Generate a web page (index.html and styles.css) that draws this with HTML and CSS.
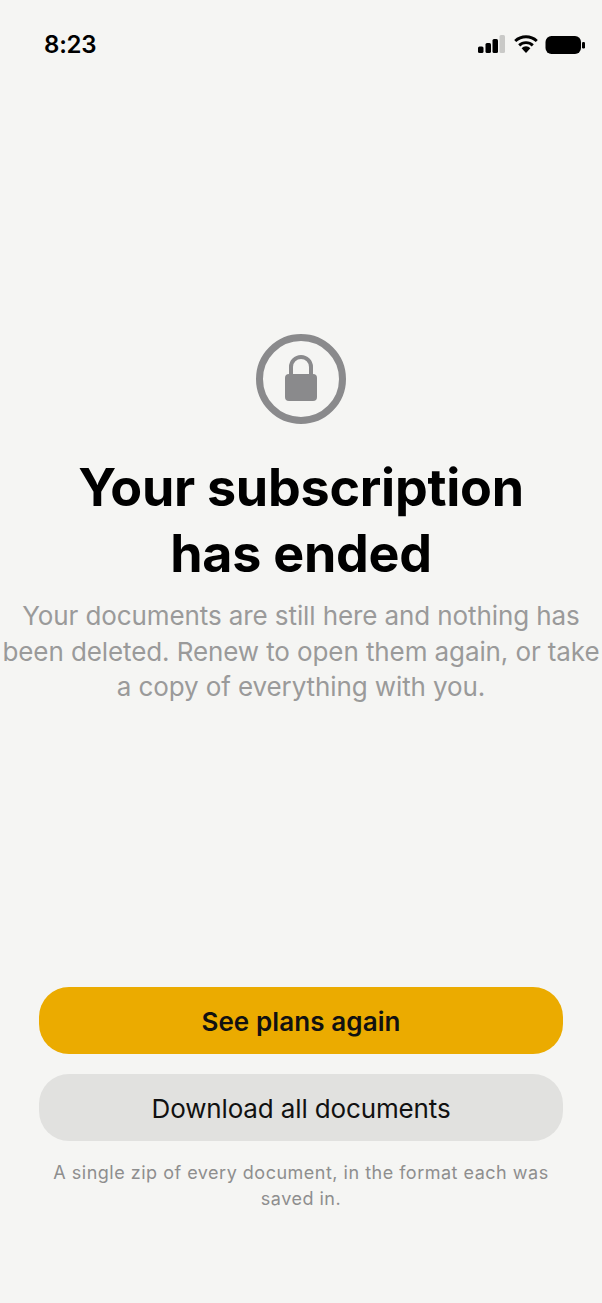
FILE: index.html
```html
<!DOCTYPE html>
<html>
<head>
  <title>Subscription ended</title>
  <meta charset="UTF-8">
  <link rel="stylesheet" href="styles.css">
</head>
<body>
  <div class="status-bar">
    <span class="clock">8:23</span>
    <div class="status-icons">
      <svg class="signal" width="27" height="20" viewBox="0 0 27 20">
        <rect x="0" y="12.500" width="5.500" height="6.500" rx="1.500" fill="#000"/>
        <rect x="7.500" y="9" width="5.500" height="10" rx="1.500" fill="#000"/>
        <rect x="14.500" y="5" width="5.500" height="14" rx="1.500" fill="#000"/>
        <rect x="21.500" y="1" width="5.500" height="18" rx="1.500" fill="#c9c9c7"/>
      </svg>
      <svg class="wifi" width="24" height="20" viewBox="0 0 24 20">
        <path d="M12 19l-4.400-4.800a6.200 6.200 0 0 1 8.800 0z" fill="#000"/>
        <path d="M5.200 11.400a9.800 9.800 0 0 1 13.600 0" fill="none" stroke="#000" stroke-width="2.900"/>
        <path d="M1.200 7a15.800 15.800 0 0 1 21.600 0" fill="none" stroke="#000" stroke-width="2.900"/>
      </svg>
      <svg class="battery" width="40" height="20" viewBox="0 0 40 20">
        <rect x="0.500" y="2" width="35.500" height="18" rx="6" fill="#000"/>
        <rect x="37" y="8" width="3" height="6.500" rx="1.200" fill="#000"/>
      </svg>
    </div>
  </div>

  <div class="message">
    <svg class="lock" width="90" height="90" viewBox="0 0 90 90">
      <circle cx="45" cy="45" r="41.500" fill="none" stroke="#8a8a8c" stroke-width="7"/>
      <path d="M35 42v-9a10 10 0 0 1 20 0v9" fill="none" stroke="#8a8a8c" stroke-width="4"/>
      <rect x="29" y="40" width="32" height="27" rx="4" fill="#8a8a8c"/>
    </svg>
    <h1>Your subscription has ended</h1>
    <p>Your documents are still here and nothing has been deleted. Renew to open them again, or take a copy of everything with you.</p>
  </div>

  <div class="actions">
    <button class="btn btn-primary">See plans again</button>
    <button class="btn btn-secondary">Download all documents</button>
    <p class="note">A single zip of every document, in the format each was saved in.</p>
  </div>
</body>
</html>
```

FILE: styles.css
```css
body {
  font-family: Inter, "Liberation Sans", sans-serif;
  width: 602px;
  height: 1303px;
  margin: 0;
  background-color: #f5f5f3;
  color: #000;
  overflow: hidden;
}
.status-bar {
  display: flex;
  justify-content: space-between;
  align-items: center;
  height: 24px;
  padding: 32px 17px 0 44px;
}
.clock {
  font-size: 24px;
  font-weight: 600;
  letter-spacing: -0.2px;
}
.status-icons {
  display: flex;
  align-items: center;
}
.signal {
  margin-right: 9px;
}
.wifi {
  margin-right: 7px;
}
.message {
  display: flex;
  flex-direction: column;
  align-items: center;
  margin-top: 278px;
  text-align: center;
}
.lock {
  display: block;
}
h1 {
  width: 500px;
  margin: 31px 0 0;
  font-size: 52px;
  line-height: 66px;
  font-weight: 700;
  letter-spacing: -0.25px;
}
.message p {
  margin: 11px 0 0;
  font-size: 26px;
  line-height: 35.5px;
  letter-spacing: -0.1px;
  color: #9a9a9a;
}
.actions {
  display: flex;
  flex-direction: column;
  align-items: center;
  margin-top: 282px;
}
.btn {
  display: block;
  width: 524px;
  height: 67px;
  padding: 2px 0 0;
  border: none;
  border-radius: 30px;
  font-family: inherit;
  font-size: 26px;
  color: #111;
  cursor: pointer;
}
.btn-primary {
  background-color: #ebab00;
  font-weight: 600;
  letter-spacing: 0.1px;
}
.btn-secondary {
  margin-top: 20px;
  background-color: #e1e1df;
  letter-spacing: -0.14px;
}
.note {
  width: 524px;
  margin: 19px 0 0;
  font-size: 18px;
  line-height: 26px;
  letter-spacing: 0.5px;
  text-align: center;
  color: #8e8e8e;
}
```
